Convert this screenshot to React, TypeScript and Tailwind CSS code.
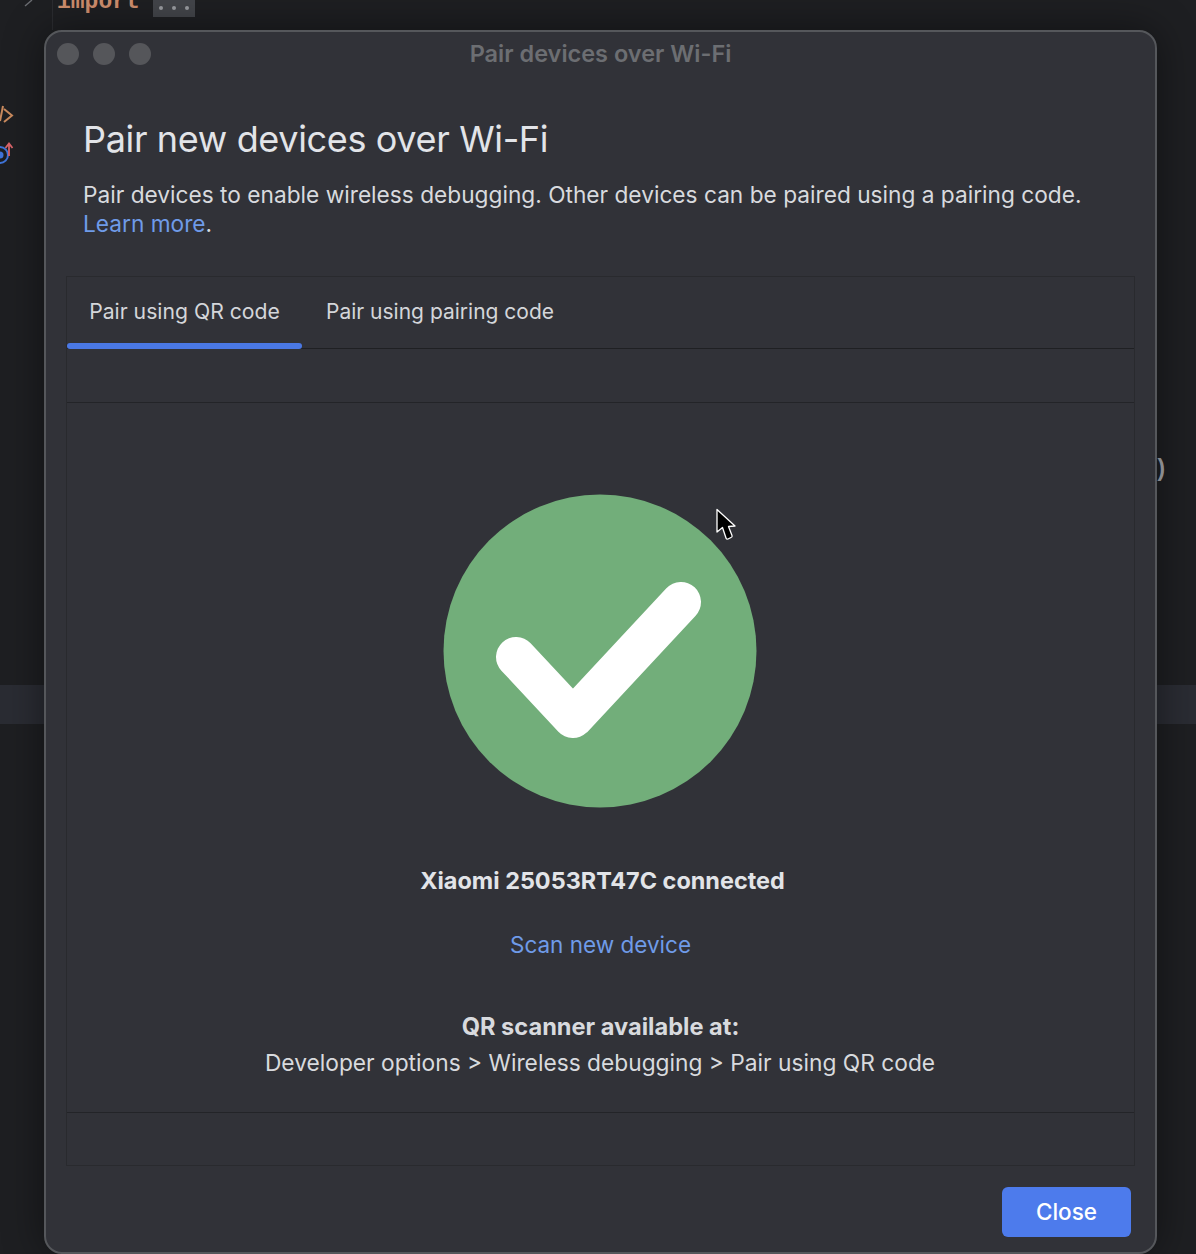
import React from "react";

const font = { fontFamily: "Inter, 'Liberation Sans', sans-serif" };

function Background() {
  return (
    <div className="absolute inset-0" aria-hidden="true">
      <div className="absolute left-[52px] top-0 h-[30px] w-px bg-[#2b2c30]" />
      <div className="absolute left-0 top-[685px] h-[39px] w-full bg-[#2a2c33]" />
      <svg className="absolute left-[24px] top-0" width="12" height="8" viewBox="0 0 12 8" fill="none">
        <path d="M1 6 L8 0" stroke="#6b6d72" strokeWidth="1.4" />
      </svg>
      <div className="absolute left-[57px] top-[-10px] text-[23px] font-bold leading-[24px] text-[#cf8e6d] font-['Liberation_Mono',monospace]">
        import
      </div>
      <div className="absolute left-[153px] top-0 flex h-[17px] w-[42px] items-center justify-center gap-[9px] bg-[#43454a] pb-[2px]">
        <span className="h-[4px] w-[4px] rounded-full bg-[#9a9ca1]" />
        <span className="h-[4px] w-[4px] rounded-full bg-[#9a9ca1]" />
        <span className="h-[4px] w-[4px] rounded-full bg-[#9a9ca1]" />
      </div>
      <svg className="absolute left-0 top-[104px]" width="16" height="22" viewBox="0 0 16 22" fill="none">
        <path d="M0 17 L3 2" stroke="#c98a5e" strokeWidth="2" />
        <path d="M4 5 L12 11.500 L4 18" stroke="#c98a5e" strokeWidth="2" />
      </svg>
      <svg className="absolute left-0 top-[140px]" width="16" height="26" viewBox="0 0 16 26" fill="none">
        <circle cx="0" cy="15" r="8" stroke="#3f74d8" strokeWidth="2" />
        <circle cx="0" cy="15" r="3.500" fill="#3f74d8" />
        <path d="M9 16 V4 M5.500 8 L9 3.500 L12.500 8" stroke="#d9646a" strokeWidth="1.800" />
      </svg>
      <div className="absolute left-[1154px] top-[457px] text-[23px] font-bold leading-[26px] text-[#a9abb0] font-['Liberation_Mono',monospace]">
        )
      </div>
    </div>
  );
}

function Cursor() {
  return (
    <svg className="absolute left-[715px] top-[508px]" width="22" height="34" viewBox="0 0 22 34">
      <path
        d="M2 1.500 L2 24 L7.500 19.500 L11 30 Q11.500 31.500 13 31 L16 29.500 Q17.500 29 17 27.500 L13.500 18.500 L20 18 Z"
        fill="#000"
        stroke="#fff"
        strokeWidth="1.300"
        strokeLinejoin="round"
      />
    </svg>
  );
}

export default function App() {
  return (
    <div className="relative h-[1254px] w-[1196px] overflow-hidden bg-[#1e1f22]" style={font}>
      <Background />
      <div className="relative ml-[44px] mt-[30px] flex h-[1224px] w-[1113px] flex-col rounded-[18px] border-2 border-[#55575b] bg-[#313238] px-[20px] shadow-[0_0_40px_rgba(0,0,0,0.45)]">
        <div className="relative flex h-[44px] shrink-0 items-center justify-center">
          <div className="absolute left-[-9px] top-[11px] flex gap-[14px]">
            <span className="h-[22px] w-[22px] rounded-full bg-[#55565a]" />
            <span className="h-[22px] w-[22px] rounded-full bg-[#55565a]" />
            <span className="h-[22px] w-[22px] rounded-full bg-[#55565a]" />
          </div>
          <span className="text-[23.5px] font-semibold leading-[28px] text-[#6c6e72]">Pair devices over Wi-Fi</span>
        </div>

        <div className="pl-[17px] pt-[39px]">
          <h1 className="text-[36px] font-normal leading-[48px] tracking-[-0.35px] text-[#e2e4e8]">Pair new devices over Wi-Fi</h1>
          <p className="mt-[17px] text-[22.7px] leading-[29px] text-[#d8dade]">
            Pair devices to enable wireless debugging. Other devices can be paired using a pairing code.
            <br />
            <span className="text-[#6f9be8]">Learn more</span>.
          </p>
        </div>

        <div className="mt-[38px] flex h-[890px] shrink-0 flex-col border border-[#292a2e]">
          <div className="flex h-[72px] shrink-0 items-stretch border-b border-[#1f2023]">
            <div className="relative flex w-[235px] items-center justify-center pb-[2px] text-[21.2px] text-[#d4d6da]">
              Pair using QR code
              <span className="absolute bottom-[-1px] left-0 h-[6px] w-full rounded-full bg-[#4a78e4]" />
            </div>
            <div className="flex items-center pb-[2px] pl-[24px] text-[21px] text-[#d4d6da]">Pair using pairing code</div>
          </div>
          <div className="h-[54px] shrink-0 border-b border-[#232428]" />
          <div className="flex flex-1 flex-col items-center pt-[91px]">
            <svg width="314" height="314" viewBox="0 0 314 314" className="mr-[1px] shrink-0">
              <circle cx="157" cy="157" r="156.500" fill="#72ae7a" />
              <path d="M73 163 L130 224 L238 108" fill="none" stroke="#fff" strokeWidth="40" strokeLinecap="round" strokeLinejoin="round" />
            </svg>
            <div className="ml-[4px] mt-[59px] text-[23.45px] font-bold leading-[28px] text-[#e2e4e8]">Xiaomi 25053RT47C connected</div>
            <div className="mt-[36px] text-[22.5px] leading-[28px] text-[#6f9be8]">Scan new device</div>
            <div className="mt-[50px] text-[23.6px] font-bold leading-[36px] text-[#d8dade]">QR scanner available at:</div>
            <div className="mr-[1px] text-[22.75px] leading-[36px] text-[#d8dade]">Developer options &gt; Wireless debugging &gt; Pair using QR code</div>
          </div>
          <div className="h-[53px] shrink-0 border-t border-[#232428]" />
        </div>

        <div className="flex justify-end pr-[4px] pt-[21px]">
          <button className="h-[50px] w-[129px] rounded-[6px] bg-[#4d7bec] text-[22.500px] font-medium text-white">Close</button>
        </div>
      </div>
      <Cursor />
    </div>
  );
}
